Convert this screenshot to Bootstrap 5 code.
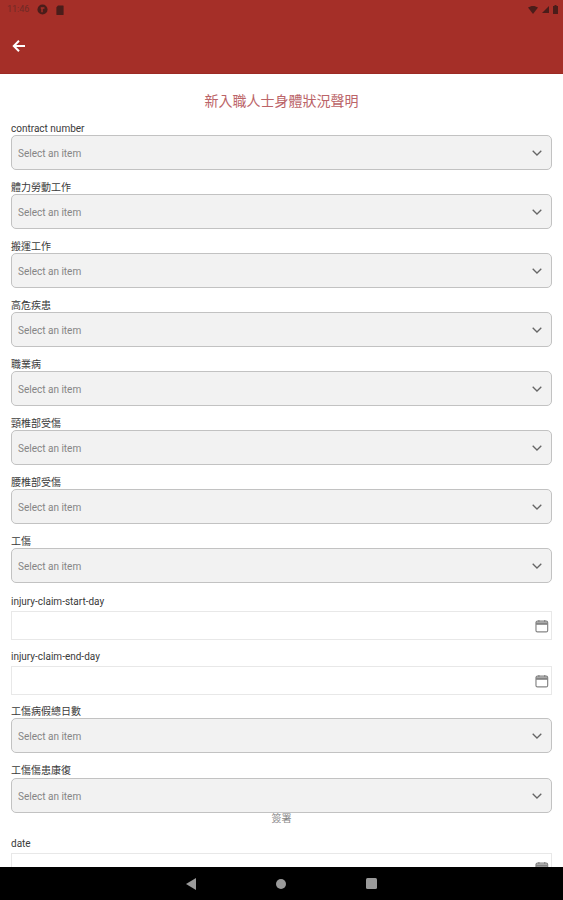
<!DOCTYPE html>
<html lang="zh-Hant">
<head>
    <meta charset="UTF-8">
    <meta name="viewport" content="width=device-width, initial-scale=1.0">
    <title>新入職人士身體狀況聲明</title>
    <link href="https://cdn.jsdelivr.net/npm/bootstrap@5.3.0/dist/css/bootstrap.min.css" rel="stylesheet">
    <style>
        body {
            font-family: Roboto, "Noto Sans CJK TC", sans-serif;
            background: #fff;
        }
        .app-screen {
            height: 900px;
            overflow: hidden;
        }
        .app-bar {
            height: 74px;
            background: #a52f28;
            border-bottom: 1px solid #9c2a24;
        }
        .status-row {
            height: 19px;
            padding: 0 5px 0 7px;
            color: #6f2a26;
            font-size: 9px;
        }
        .back-btn {
            padding: 20px 0 0 12px;
            line-height: 0;
        }
        .form-area {
            padding: 17px 11px 0 11px;
            min-height: 0;
            overflow: hidden;
        }
        .page-title {
            color: #bb6468;
            font-size: 14px;
            font-weight: 400;
            line-height: 20px;
            margin: 0 0 11px 0;
        }
        .field {
            margin-bottom: 11px;
        }
        .field.after-date {
            margin-bottom: 10px;
        }
        .field-label {
            display: block;
            font-size: 10px;
            line-height: 12px;
            padding-top: 1px;
            color: #3a3a3a;
            margin-bottom: 0;
        }
        .field-label.gap-date {
            margin-bottom: 3px;
        }
        .field-label.gap-first {
            padding-top: 2px;
        }
        .field-label.gap-wide {
            margin-bottom: 1px;
        }
        .item-select.form-select {
            height: 35px;
            padding: 2px 24px 0 6px;
            font-size: 10px;
            color: #858585;
            background-color: #f2f2f2;
            border: 1.5px solid #c2c2c2;
            border-radius: 5px;
            background-image: url("data:image/svg+xml,%3csvg xmlns='http://www.w3.org/2000/svg' viewBox='0 0 10 6'%3e%3cpath fill='none' stroke='%23666' stroke-width='1.3' d='M.7.7 5 5l4.3-4.3'/%3e%3c/svg%3e");
            background-position: right 9px center;
            background-size: 10px 6px;
        }
        .date-box {
            height: 29px;
            background: #fff;
            border: 1px solid #e8e8e8;
            padding-right: 2px;
        }
        .date-box .form-control {
            height: 100%;
            border: 0;
            padding: 0 6px;
            font-size: 10px;
            background: transparent;
            box-shadow: none;
        }
        .sign-label {
            font-size: 10px;
            line-height: 10px;
            padding-top: 1px;
            color: #858585;
            margin-bottom: 13px;
        }
        .nav-strip {
            height: 33px;
            background: #000;
            gap: 80px;
            flex-shrink: 0;
        }
    </style>
</head>
<body>
    <div class="app-screen d-flex flex-column">
        <!-- Status bar and back arrow -->
        <header class="app-bar flex-shrink-0">
            <div class="status-row d-flex align-items-center justify-content-between">
                <div class="d-flex align-items-center gap-2">
                    <span>11:46</span>
                    <svg width="11" height="11" viewBox="0 0 10 10">
                        <circle cx="5" cy="5" r="4.6" fill="#4a1d1a"/>
                        <path d="M3.4 3h3.4v1.4H5.2V7.6H3.9V4.4H3.4z" fill="#a52f28"/>
                    </svg>
                    <svg width="8" height="10" viewBox="0 0 8 10">
                        <path d="M2 .5h5a.6.6 0 0 1 .6.6v8.3a.6.6 0 0 1-.6.6H1a.6.6 0 0 1-.6-.6V2.3z" fill="#4a1d1a"/>
                    </svg>
                </div>
                <div class="d-flex align-items-center gap-1">
                    <svg width="10" height="8" viewBox="0 0 10 8"><path d="M0 1.6C3 -.5 7 -.5 10 1.6L5 8z" fill="#4a1d1a"/></svg>
                    <svg width="7" height="7" viewBox="0 0 7 7"><path d="M7 0v7H0z" fill="#4a1d1a"/></svg>
                    <svg width="5" height="9" viewBox="0 0 5 9"><path d="M1.5 0h2v1H5v8H0V1h1.5z" fill="#4a1d1a"/></svg>
                </div>
            </div>
            <div class="back-btn">
                <svg width="14" height="14" viewBox="0 0 14 14" fill="none" stroke="#fff" stroke-width="2">
                    <path d="M13 7H2M7 1.8 1.8 7 7 12.2"/>
                </svg>
            </div>
        </header>

        <main class="form-area flex-grow-1">
            <h1 class="page-title text-center">新入職人士身體狀況聲明</h1>

            <div class="field">
                <label class="field-label">contract number</label>
                <select class="form-select item-select"><option>Select an item</option></select>
            </div>
            <div class="field">
                <label class="field-label">體力勞動工作</label>
                <select class="form-select item-select"><option>Select an item</option></select>
            </div>
            <div class="field">
                <label class="field-label">搬運工作</label>
                <select class="form-select item-select"><option>Select an item</option></select>
            </div>
            <div class="field">
                <label class="field-label">高危疾患</label>
                <select class="form-select item-select"><option>Select an item</option></select>
            </div>
            <div class="field">
                <label class="field-label">職業病</label>
                <select class="form-select item-select"><option>Select an item</option></select>
            </div>
            <div class="field">
                <label class="field-label">頸椎部受傷</label>
                <select class="form-select item-select"><option>Select an item</option></select>
            </div>
            <div class="field">
                <label class="field-label">腰椎部受傷</label>
                <select class="form-select item-select"><option>Select an item</option></select>
            </div>
            <div class="field">
                <label class="field-label">工傷</label>
                <select class="form-select item-select"><option>Select an item</option></select>
            </div>
            <div class="field after-date">
                <label class="field-label gap-date gap-first">injury-claim-start-day</label>
                <div class="date-box d-flex align-items-center">
                    <input type="text" class="form-control flex-grow-1">
                    <svg width="14" height="14" viewBox="0 0 14 14" fill="none" stroke="#858585" stroke-width="1.2">
                        <rect x="1" y="2" width="12" height="11" rx="1.5"/>
                        <path d="M1 4.5h12" stroke-width="2.6"/>
                        <path d="M4 .8v2M10 .8v2"/>
                    </svg>
                </div>
            </div>
            <div class="field after-date">
                <label class="field-label gap-date">injury-claim-end-day</label>
                <div class="date-box d-flex align-items-center">
                    <input type="text" class="form-control flex-grow-1">
                    <svg width="14" height="14" viewBox="0 0 14 14" fill="none" stroke="#858585" stroke-width="1.2">
                        <rect x="1" y="2" width="12" height="11" rx="1.5"/>
                        <path d="M1 4.5h12" stroke-width="2.6"/>
                        <path d="M4 .8v2M10 .8v2"/>
                    </svg>
                </div>
            </div>
            <div class="field">
                <label class="field-label">工傷病假總日數</label>
                <select class="form-select item-select"><option>Select an item</option></select>
            </div>
            <div class="field mb-0">
                <label class="field-label gap-wide">工傷傷患康復</label>
                <select class="form-select item-select"><option>Select an item</option></select>
            </div>
            <div class="sign-label text-center">簽署</div>
            <div class="field">
                <label class="field-label gap-date">date</label>
                <div class="date-box d-flex align-items-center">
                    <input type="text" class="form-control flex-grow-1">
                    <svg width="14" height="14" viewBox="0 0 14 14" fill="none" stroke="#858585" stroke-width="1.2">
                        <rect x="1" y="2" width="12" height="11" rx="1.5"/>
                        <path d="M1 4.5h12" stroke-width="2.6"/>
                        <path d="M4 .8v2M10 .8v2"/>
                    </svg>
                </div>
            </div>
        </main>

        <!-- Android navigation bar -->
        <footer class="nav-strip d-flex align-items-center justify-content-center">
            <svg width="10" height="12" viewBox="0 0 10 12"><path d="M10 0v12L0 6z" fill="#9a9a9a"/></svg>
            <svg width="10" height="10" viewBox="0 0 10 10"><circle cx="5" cy="5" r="5" fill="#9a9a9a"/></svg>
            <svg width="11" height="11" viewBox="0 0 11 11"><rect width="11" height="11" rx="1.5" fill="#9a9a9a"/></svg>
        </footer>
    </div>

    <script src="https://cdn.jsdelivr.net/npm/bootstrap@5.3.0/dist/js/bootstrap.bundle.min.js"></script>
</body>
</html>
